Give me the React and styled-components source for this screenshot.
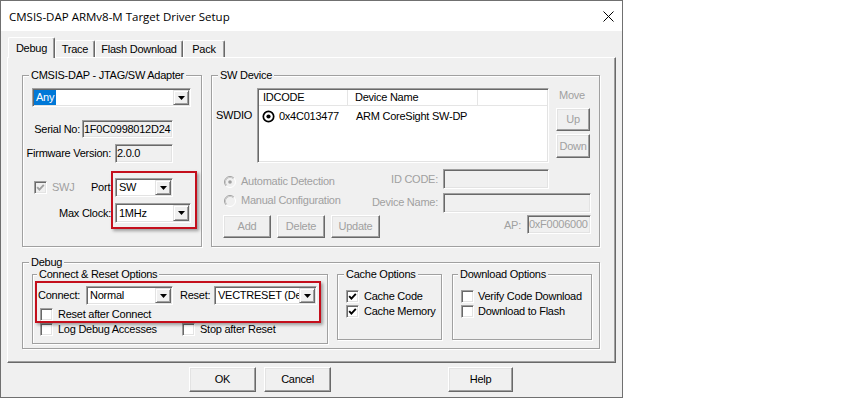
import React from "react";
import styled, { createGlobalStyle, css } from "styled-components";

const GlobalStyle = createGlobalStyle`
  *, *::before, *::after { box-sizing: border-box; }
  html, body { margin: 0; padding: 0; background: #ffffff; }
  body {
    font-family: "Liberation Sans", Arial, sans-serif;
    font-size: 11px;
    line-height: 13px;
    letter-spacing: -0.25px;
    color: #000;
  }
`;

const DIM = "#a0a0a0";

const sunken = css`
  border: 1px solid;
  border-color: #a0a0a0 #ffffff #ffffff #a0a0a0;
  box-shadow: inset 1px 1px 0 #696969, inset -1px -1px 0 #e3e3e3;
`;

const raised = css`
  border: 1px solid;
  border-color: #ffffff #696969 #696969 #ffffff;
  box-shadow: inset -1px -1px 0 #a0a0a0, inset 1px 1px 0 #e3e3e3;
`;

const Window = styled.div`
  width: 623px;
  height: 398px;
  border: 1px solid #707070;
  background: #f0f0f0;
  display: flex;
  flex-direction: column;
`;

const TitleBar = styled.div`
  height: 30px;
  flex-shrink: 0;
  background: #ffffff;
  display: flex;
  align-items: center;
  padding: 0 8px;
`;

const TitleText = styled.span`
  font-family: "Open Sans", "Noto Sans", sans-serif;
  font-size: 11.5px;
  letter-spacing: 0;
  color: #000;
`;

const CloseIcon = styled.svg`
  margin-left: auto;
  display: block;
`;

const Body = styled.div`
  flex: 1;
  display: flex;
  flex-direction: column;
  padding: 6px 6px 0 6px;
`;

const TabStrip = styled.div`
  display: flex;
  align-items: flex-end;
  height: 20px;
  padding-left: 1px;
`;

const Tab = styled.div`
  position: relative;
  z-index: ${(p) => (p.$active ? 2 : 1)};
  width: ${(p) => p.$w}px;
  height: ${(p) => (p.$active ? 21 : 17)}px;
  margin-bottom: ${(p) => (p.$active ? -1 : 0)}px;
  background: #f0f0f0;
  border-top: 1px solid #ffffff;
  border-left: 1px solid #ffffff;
  border-right: 1px solid #696969;
  box-shadow: inset -1px 0 0 #a0a0a0;
  border-radius: 2px 2px 0 0;
  display: flex;
  align-items: center;
  justify-content: center;
  white-space: nowrap;
`;

const Panel = styled.div`
  width: 609px;
  height: 306px;
  border-top: 1px solid #ffffff;
  border-left: 1px solid #ffffff;
  border-right: 1px solid #696969;
  border-bottom: 1px solid #696969;
  box-shadow: inset -1px -1px 0 #a0a0a0;
  padding: 17px 0 0 14px;
  display: flex;
  flex-direction: column;
`;

const GroupRow = styled.div`
  display: flex;
  align-items: flex-start;
  gap: ${(p) => p.$gap || 0}px;
  margin-top: ${(p) => p.$mt || 0}px;
  padding-left: ${(p) => p.$pl || 0}px;
`;

const Group = styled.div`
  position: relative;
  flex-shrink: 0;
  width: ${(p) => p.$w}px;
  height: ${(p) => p.$h}px;
  margin-left: ${(p) => p.$ml || 0}px;
  margin-top: ${(p) => p.$mt || 0}px;
  border: 1px solid #a0a0a0;
  box-shadow: 1px 1px 0 #ffffff, inset 1px 1px 0 #ffffff;
  display: flex;
  flex-direction: column;
`;

const Legend = styled.span`
  position: absolute;
  top: -7px;
  left: ${(p) => p.$l ?? 6}px;
  padding: 0 2px;
  background: #f0f0f0;
  line-height: 13px;
  white-space: nowrap;
`;

const Row = styled.div`
  display: flex;
  align-items: ${(p) => p.$align || "center"};
  margin-top: ${(p) => p.$mt || 0}px;
  padding-left: ${(p) => p.$pl || 0}px;
  padding-right: ${(p) => p.$pr || 0}px;
`;

const Label = styled.span`
  white-space: nowrap;
  color: ${(p) => (p.$dim ? DIM : "#000")};
  text-align: ${(p) => (p.$right ? "right" : "left")};
  margin-left: ${(p) => p.$ml || 0}px;
  margin-top: ${(p) => p.$mt || 0}px;
  padding-left: ${(p) => p.$pl || 0}px;
  ${(p) => p.$w && css`width: ${p.$w}px; flex-shrink: 0;`}
  ${(p) => p.$grow && css`flex: 1;`}
`;

const Field = styled.div`
  ${sunken}
  flex-shrink: 0;
  width: ${(p) => p.$w}px;
  height: ${(p) => p.$h || 19}px;
  margin-left: ${(p) => p.$ml || 0}px;
  background: ${(p) => (p.$white ? "#ffffff" : "#f0f0f0")};
  color: ${(p) => (p.$dim ? DIM : "#000")};
  display: flex;
  align-items: center;
  padding: 0 1px;
  overflow: hidden;
  white-space: nowrap;
`;

const ComboFrame = styled.div`
  ${sunken}
  flex-shrink: 0;
  width: ${(p) => p.$w}px;
  height: ${(p) => p.$h || 19}px;
  margin-left: ${(p) => p.$ml || 0}px;
  background: #ffffff;
  padding: 1px;
  display: flex;
`;

const ComboValue = styled.div`
  flex: 1;
  min-width: 0;
  overflow: hidden;
  white-space: nowrap;
  display: flex;
  align-items: center;
  padding-left: ${(p) => (p.$flush ? 0 : 2)}px;
`;

const Highlight = styled.span`
  background: #0078d7;
  color: #ffffff;
  padding: 1px 2px;
  line-height: 13px;
`;

const DropButton = styled.div`
  width: 16px;
  flex-shrink: 0;
  height: 100%;
  border: 1px solid;
  border-color: #e3e3e3 #696969 #696969 #e3e3e3;
  box-shadow: inset 1px 1px 0 #ffffff, inset -1px -1px 0 #a0a0a0;
  background: #f0f0f0;
  display: flex;
  align-items: center;
  justify-content: center;
`;

const Button = styled.div`
  ${raised}
  flex-shrink: 0;
  width: ${(p) => p.$w}px;
  height: ${(p) => p.$h || 23}px;
  margin-left: ${(p) => p.$ml || 0}px;
  margin-top: ${(p) => p.$mt || 0}px;
  background: #f0f0f0;
  color: ${(p) => (p.$dim ? DIM : "#000")};
  display: flex;
  align-items: center;
  justify-content: center;
  white-space: nowrap;
`;

const CheckFrame = styled.span`
  ${sunken}
  width: 13px;
  height: 13px;
  flex-shrink: 0;
  background: ${(p) => (p.$disabled ? "#f0f0f0" : "#ffffff")};
  display: flex;
  align-items: center;
  justify-content: center;
`;

const CheckItem = styled.span`
  display: flex;
  align-items: center;
  flex-shrink: 0;
  ${(p) => p.$w && css`width: ${p.$w}px;`}
  margin-top: ${(p) => p.$mt || 0}px;
`;

const ItemText = styled.span`
  margin-left: ${(p) => p.$gap ?? 5}px;
  color: ${(p) => (p.$dim ? DIM : "#000")};
  white-space: nowrap;
`;

const RedMark = styled.div`
  position: absolute;
  left: ${(p) => p.$x}px;
  top: ${(p) => p.$y}px;
  width: ${(p) => p.$w}px;
  height: ${(p) => p.$h}px;
  border: 2px solid #c40f1c;
  box-shadow: 2px 2px 3px rgba(0, 0, 0, 0.35);
  pointer-events: none;
  z-index: 3;
`;

const List = styled.div`
  ${sunken}
  flex-shrink: 0;
  width: 292px;
  height: 75px;
  background: #ffffff;
  padding: 1px;
  display: flex;
  flex-direction: column;
`;

const ListHeader = styled.div`
  display: flex;
  height: 16px;
  border-bottom: 1px solid #e5e5e5;
`;

const HeadCell = styled.div`
  width: ${(p) => p.$w}px;
  flex-shrink: 0;
  padding-left: ${(p) => p.$pl}px;
  border-right: 1px solid #e5e5e5;
  display: flex;
  align-items: center;
  white-space: nowrap;
`;

const ListRow = styled.div`
  display: flex;
  height: 20px;
  align-items: center;
`;

const Cell = styled.div`
  width: ${(p) => p.$w}px;
  flex-shrink: 0;
  padding-left: ${(p) => p.$pl}px;
  display: flex;
  align-items: center;
  gap: 4px;
  white-space: nowrap;
`;

const MoveColumn = styled.div`
  width: 34px;
  margin-left: 7px;
  display: flex;
  flex-direction: column;
  align-items: flex-start;
`;

const MoveLabel = styled.span`
  color: ${DIM};
  margin-top: 1px;
  padding-left: 3px;
`;

const ButtonBar = styled.div`
  display: flex;
  margin-top: 4px;
  padding-left: 182px;
`;

function Arrow() {
  return (
    <svg width="7" height="4" viewBox="0 0 7 4">
      <polygon points="0,0 7,0 3.5,4" fill="#000" />
    </svg>
  );
}

function Combo({ w, h, ml, flush, children }) {
  return (
    <ComboFrame $w={w} $h={h} $ml={ml}>
      <ComboValue $flush={flush}>{children}</ComboValue>
      <DropButton>
        <Arrow />
      </DropButton>
    </ComboFrame>
  );
}

function Check({ checked, disabled }) {
  return (
    <CheckFrame $disabled={disabled}>
      {checked && (
        <svg width="9" height="9" viewBox="0 0 9 9">
          <path
            d="M1.2 4.2 L3.4 6.6 L7.8 1.8"
            fill="none"
            stroke={disabled ? DIM : "#000"}
            strokeWidth="1.9"
          />
        </svg>
      )}
    </CheckFrame>
  );
}

function Radio({ checked }) {
  return (
    <svg width="12" height="12" viewBox="0 0 12 12" style={{ flexShrink: 0 }}>
      <circle cx="6" cy="6" r="5.5" fill="#f0f0f0" />
      <path d="M2.11 9.89 A5.5 5.5 0 0 1 9.89 2.11" fill="none" stroke="#a0a0a0" />
      <path d="M9.89 2.11 A5.5 5.5 0 0 1 2.11 9.89" fill="none" stroke="#ffffff" />
      <path d="M2.82 9.18 A4.5 4.5 0 0 1 9.18 2.82" fill="none" stroke="#c8c8c8" />
      {checked && <circle cx="6" cy="6" r="1.8" fill="#a0a0a0" />}
    </svg>
  );
}

function TargetIcon() {
  return (
    <svg width="13" height="13" viewBox="0 0 13 13" style={{ flexShrink: 0 }}>
      <circle cx="6.5" cy="6.5" r="5.2" fill="#ffffff" stroke="#000" strokeWidth="1.7" />
      <circle cx="6.5" cy="6.5" r="2.1" fill="#000" />
    </svg>
  );
}

function CheckOption({ label, checked, disabled, w, gap, mt }) {
  return (
    <CheckItem $w={w} $mt={mt}>
      <Check checked={checked} disabled={disabled} />
      <ItemText $gap={gap} $dim={disabled}>{label}</ItemText>
    </CheckItem>
  );
}

function RadioOption({ label, checked, mt }) {
  return (
    <CheckItem $mt={mt}>
      <Radio checked={checked} />
      <ItemText $dim>{label}</ItemText>
    </CheckItem>
  );
}

function AdapterGroup() {
  return (
    <Group $w={180} $h={172}>
      <Legend>CMSIS-DAP - JTAG/SW Adapter</Legend>
      <Row $mt={12} $pl={9}>
        <Combo w={159} flush>
          <Highlight>Any</Highlight>
        </Combo>
      </Row>
      <Row $mt={13}>
        <Label $w={57} $right>Serial No:</Label>
        <Field $w={91} $h={18} $ml={2}>1F0C0998012D24</Field>
      </Row>
      <Row $mt={6}>
        <Label $w={88} $right>Firmware Version:</Label>
        <Field $w={58} $h={19} $ml={4}>2.0.0</Field>
      </Row>
      <Row $mt={15} $pl={11} $pr={28}>
        <CheckOption label="SWJ" checked disabled gap={5} />
        <Label $grow $right>Port:</Label>
        <Combo w={58} ml={2}>SW</Combo>
      </Row>
      <Row $mt={6}>
        <Label $w={88} $right>Max Clock:</Label>
        <Combo w={76} h={20} ml={4}>1MHz</Combo>
      </Row>
      <RedMark $x={88} $y={95} $w={86} $h={58} />
    </Group>
  );
}

function SwDeviceGroup() {
  return (
    <Group $w={389} $h={172}>
      <Legend>SW Device</Legend>
      <Row $mt={12} $align="flex-start">
        <Label $w={45} $mt={21} $pl={4}>SWDIO</Label>
        <List>
          <ListHeader>
            <HeadCell $w={89} $pl={4}>IDCODE</HeadCell>
            <HeadCell $w={130} $pl={7}>Device Name</HeadCell>
          </ListHeader>
          <ListRow>
            <Cell $w={89} $pl={3}>
              <TargetIcon />
              0x4C013477
            </Cell>
            <Cell $w={130} $pl={8}>ARM CoreSight SW-DP</Cell>
          </ListRow>
        </List>
        <MoveColumn>
          <MoveLabel>Move</MoveLabel>
          <Button $w={34} $h={23} $mt={6} $dim>Up</Button>
          <Button $w={34} $h={24} $mt={3} $dim>Down</Button>
        </MoveColumn>
      </Row>
      <Row $mt={6} $pl={12} $pr={50} $align="flex-start">
        <RadioOption label="Automatic Detection" checked mt={6} />
        <Label $grow $right $dim $mt={4}>ID CODE:</Label>
        <Field $w={106} $h={20} $ml={5} />
      </Row>
      <Row $mt={4} $pl={12} $pr={8} $align="flex-start">
        <RadioOption label="Manual Configuration" mt={1} />
        <Label $grow $right $dim $mt={3}>Device Name:</Label>
        <Field $w={148} $h={20} $ml={5} />
      </Row>
      <Row $mt={2} $pl={11} $pr={8} $align="flex-start">
        <Button $w={48} $dim>Add</Button>
        <Button $w={48} $ml={6} $dim>Delete</Button>
        <Button $w={49} $ml={6} $dim>Update</Button>
        <Label $grow $right $dim $mt={4}>AP:</Label>
        <Field $w={64} $h={19} $ml={6} $dim>0xF0006000</Field>
      </Row>
    </Group>
  );
}

function DebugGroup() {
  return (
    <Group $w={578} $h={87} $mt={15}>
      <Legend>Debug</Legend>
      <GroupRow $mt={11} $pl={9}>
        <Group $w={296} $h={70}>
          <Legend $l={4}>Connect &amp; Reset Options</Legend>
          <Row $mt={11} $pl={5}>
            <Label $w={48}>Connect:</Label>
            <Combo w={87}>Normal</Combo>
            <Label $w={34} $ml={7}>Reset:</Label>
            <Combo w={103}>VECTRESET (Default)</Combo>
          </Row>
          <Row $mt={3} $pl={7}>
            <CheckOption label="Reset after Connect" />
          </Row>
          <Row $mt={2} $pl={7}>
            <CheckOption label="Log Debug Accesses" w={142} />
            <CheckOption label="Stop after Reset" />
          </Row>
          <RedMark $x={2} $y={6} $w={286} $h={42} />
        </Group>
        <Group $w={105} $h={66} $ml={9}>
          <Legend>Cache Options</Legend>
          <Row $mt={15} $pl={8}>
            <CheckOption label="Cache Code" checked />
          </Row>
          <Row $mt={2} $pl={8}>
            <CheckOption label="Cache Memory" checked />
          </Row>
        </Group>
        <Group $w={140} $h={66} $ml={10}>
          <Legend $l={5}>Download Options</Legend>
          <Row $mt={15} $pl={8}>
            <CheckOption label="Verify Code Download" gap={4} />
          </Row>
          <Row $mt={2} $pl={8}>
            <CheckOption label="Download to Flash" gap={4} />
          </Row>
        </Group>
      </GroupRow>
    </Group>
  );
}

export default function App() {
  return (
    <>
      <GlobalStyle />
      <Window>
        <TitleBar>
          <TitleText>CMSIS-DAP ARMv8-M Target Driver Setup</TitleText>
          <CloseIcon width="11" height="11" viewBox="0 0 11 11">
            <path d="M0.5 0.5 L10.5 10.5 M10.5 0.5 L0.5 10.5" stroke="#000" strokeWidth="1" />
          </CloseIcon>
        </TitleBar>
        <Body>
          <TabStrip>
            <Tab $w={47} $active>Debug</Tab>
            <Tab $w={40}>Trace</Tab>
            <Tab $w={88}>Flash Download</Tab>
            <Tab $w={42}>Pack</Tab>
          </TabStrip>
          <Panel>
            <GroupRow $gap={9}>
              <AdapterGroup />
              <SwDeviceGroup />
            </GroupRow>
            <DebugGroup />
          </Panel>
          <ButtonBar>
            <Button $w={67} $h={25}>OK</Button>
            <Button $w={67} $h={25} $ml={8}>Cancel</Button>
            <Button $w={65} $h={25} $ml={117}>Help</Button>
          </ButtonBar>
        </Body>
      </Window>
    </>
  );
}
